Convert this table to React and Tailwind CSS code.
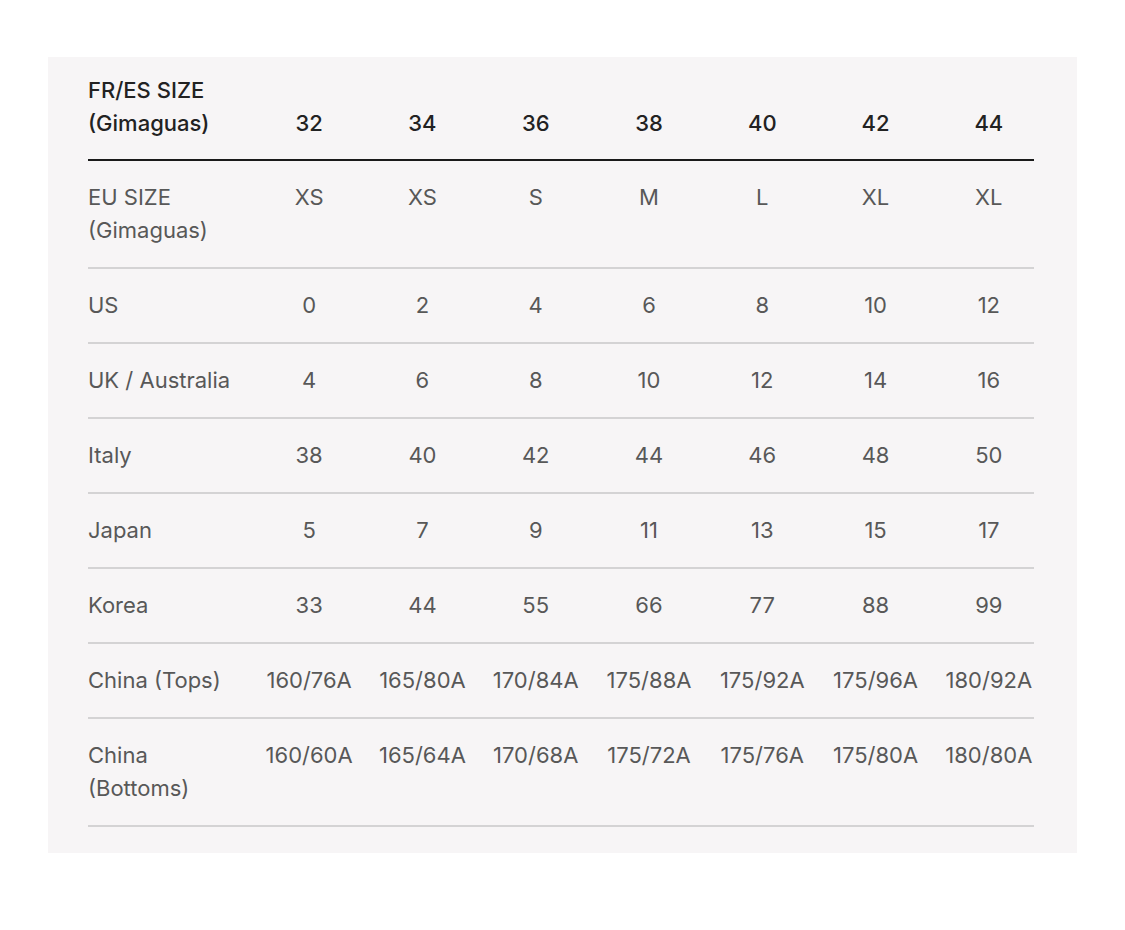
export default function App() {
  const head = ["32", "34", "36", "38", "40", "42", "44"];
  const rows = [
    [["EU SIZE", "(Gimaguas)"], ["XS", "XS", "S", "M", "L", "XL", "XL"]],
    [["US"], ["0", "2", "4", "6", "8", "10", "12"]],
    [["UK / Australia"], ["4", "6", "8", "10", "12", "14", "16"]],
    [["Italy"], ["38", "40", "42", "44", "46", "48", "50"]],
    [["Japan"], ["5", "7", "9", "11", "13", "15", "17"]],
    [["Korea"], ["33", "44", "55", "66", "77", "88", "99"]],
    [["China (Tops)"], ["160/76A", "165/80A", "170/84A", "175/88A", "175/92A", "175/96A", "180/92A"]],
    [["China", "(Bottoms)"], ["160/60A", "165/64A", "170/68A", "175/72A", "175/76A", "175/80A", "180/80A"]],
  ];
  return (
    <div className="min-h-[930px] w-[1125px] bg-white pt-[57px] pl-[48px]" style={{ fontFamily: "Inter, 'Liberation Sans', sans-serif" }}>
      <div className="w-[1029px] h-[796px] bg-[#f7f5f6] pl-[40px] pt-[17px]">
        <div className="w-[946px]">
          <div className="grid grid-cols-[153px_repeat(7,1fr)] items-end pb-[19px] border-b-2 border-[#1a1a1a] text-[22px] leading-[33px] text-[#222] font-medium">
            <div className="whitespace-nowrap">
              <div>FR/ES SIZE</div>
              <div>(Gimaguas)</div>
            </div>
            {head.map((h) => (
              <div key={h} className="pl-[23px] text-center">{h}</div>
            ))}
          </div>
          {rows.map(([label, vals], i) => (
            <div key={i} className="grid grid-cols-[153px_repeat(7,1fr)] items-start py-5 border-b-2 border-[#d4d3d4] text-[22px] leading-[33px] text-[#585858]">
              <div className="whitespace-nowrap">
                {label.map((l) => (
                  <div key={l}>{l}</div>
                ))}
              </div>
              {vals.map((v, j) => (
                <div key={j} className="pl-[23px] text-center whitespace-nowrap">{v}</div>
              ))}
            </div>
          ))}
        </div>
      </div>
    </div>
  );
}
